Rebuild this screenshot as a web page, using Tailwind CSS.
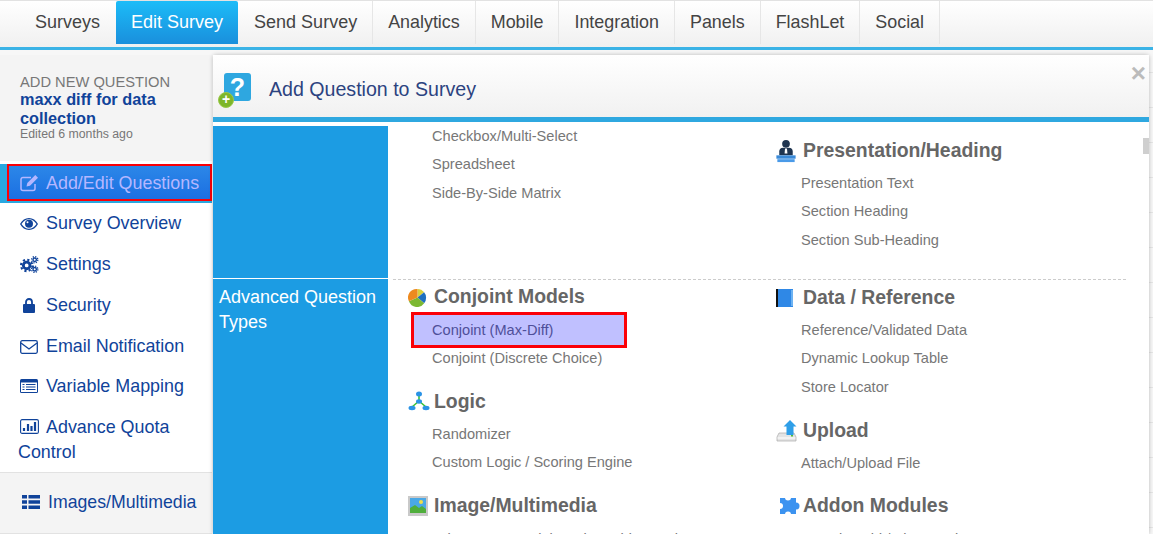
<!DOCTYPE html>
<html lang="en">
<head>
  <meta charset="UTF-8" />
  <title>Add Question to Survey</title>
  <script src="https://cdn.jsdelivr.net/npm/@tailwindcss/browser@4"></script>
</head>
<body class="[font-family:'Liberation_Sans',Arial,sans-serif] bg-[#f7f7f7] w-[1153px] h-[534px] overflow-hidden relative">

  <!-- Top tabs -->
  <nav class="h-[50px] pl-[20px] flex items-start bg-gradient-to-b from-[#ffffff] to-[#f0f0f0] border-t border-[#e2e2e2] border-b-[3px] border-b-[#3bb3e6] text-[18px] text-[#444]">
    <a class="h-[43px] pl-[15px] pr-[16px] flex items-center">Surveys</a>
    <a class="h-[43px] px-[15px] flex items-center text-white rounded-t-[2px] bg-gradient-to-b from-[#1cbcf8] to-[#1a8fdc]">Edit Survey</a>
    <a class="h-[43px] pl-[16px] pr-[15px] flex items-center border-r border-[#e6e6e6]">Send Survey</a>
    <a class="h-[43px] px-[15px] flex items-center border-r border-[#e6e6e6] text-[17.900px]">Analytics</a>
    <a class="h-[43px] px-[15px] flex items-center border-r border-[#e6e6e6] text-[17.900px]">Mobile</a>
    <a class="h-[43px] px-[15px] flex items-center border-r border-[#e6e6e6] text-[17.900px]">Integration</a>
    <a class="h-[43px] px-[15px] flex items-center border-r border-[#e6e6e6] text-[17.900px]">Panels</a>
    <a class="h-[43px] px-[15px] flex items-center border-r border-[#e6e6e6] text-[17.900px]">FlashLet</a>
    <a class="h-[43px] px-[15px] flex items-center border-r border-[#e6e6e6] text-[17.900px]">Social</a>
  </nav>

  <div class="flex items-start">
    <!-- Sidebar -->
    <aside class="w-[212px] mt-[5px] h-[479px] shrink-0 bg-white text-[17.900px] text-[#10439a]">
      <div class="h-[106px] bg-[#f4f4f4] pl-[20px] pt-[19px] mb-[3px]">
        <div class="text-[14.700px] leading-[16px] text-[#777]">ADD NEW QUESTION</div>
        <div class="text-[16.300px] leading-[19px] font-bold w-[170px]">maxx diff for data collection</div>
        <div class="text-[12.300px] leading-[14px] -mt-px text-[#777]">Edited 6 months ago</div>
      </div>

      <!-- highlighted item -->
      <div class="h-[39px] pl-[7px] bg-[#2aa8e0]">
        <div class="h-[37px] mt-px pl-[11px] pt-px flex items-center gap-[6px] border-[2px] border-[#fb0007] bg-gradient-to-b from-[#2c87e8] to-[#1c6fe2] text-[#b5b7ff]">
          <svg viewBox="0 0 20 18" class="w-[20px] h-[18px]" fill="none" stroke="currentColor" stroke-width="1.5"><path d="M15 10v4.500a2 2 0 0 1-2 2H3a2 2 0 0 1-2-2V5.500a2 2 0 0 1 2-2h8"/><path d="M6.500 12.500l.8-3.500 8-8 2.700 2.700-8 8z" fill="currentColor" stroke="none"/></svg>
          <span>Add/Edit Questions</span>
        </div>
      </div>

      <div class="h-[41px] pl-[20px] flex items-center gap-[8px]">
        <svg viewBox="0 0 18 12" class="w-[18px] h-[12px]" fill="currentColor"><path fill-rule="evenodd" d="M9 0c3.800 0 7 2.300 9 6-2 3.700-5.200 6-9 6S2 9.700 0 6c2-3.700 5.200-6 9-6zM9 1.200C6.100 1.200 3.500 3 1.500 6c2 3 4.600 4.800 7.500 4.800S14.500 9 16.500 6C14.500 3 11.900 1.200 9 1.200z"/><circle cx="9" cy="5.700" r="4"/><circle cx="7.500" cy="4.300" r="1" fill="#fff"/></svg>
        <span>Survey Overview</span>
      </div>
      <div class="h-[41px] pl-[20px] flex items-center gap-[7px]">
        <svg viewBox="0 0 20 18" class="w-[19px] h-[17px]" fill="none" stroke="currentColor"><circle cx="7" cy="10" r="3.500" stroke-width="3"/><circle cx="7" cy="10" r="6" stroke-width="2.200" stroke-dasharray="2.300 2.400"/><circle cx="15.500" cy="4" r="1.800" stroke-width="1.500"/><circle cx="15.500" cy="4" r="3.300" stroke-width="1.400" stroke-dasharray="1.300 1.300"/><circle cx="15.500" cy="14" r="1.800" stroke-width="1.500"/><circle cx="15.500" cy="14" r="3.300" stroke-width="1.400" stroke-dasharray="1.300 1.300"/></svg>
        <span>Settings</span>
      </div>
      <div class="h-[41px] pl-[23px] flex items-center gap-[11px]">
        <svg viewBox="0 0 12 15" class="w-[12px] h-[15px]" fill="currentColor"><path d="M1 6h10a1 1 0 0 1 1 1v7a1 1 0 0 1-1 1H1a1 1 0 0 1-1-1V7a1 1 0 0 1 1-1z"/><path d="M3 6.500V4a3 3 0 0 1 6 0v2.500" fill="none" stroke="currentColor" stroke-width="1.800"/></svg>
        <span>Security</span>
      </div>
      <div class="h-[41px] pl-[20px] flex items-center gap-[8px]">
        <svg viewBox="0 0 18 14" class="w-[18px] h-[14px]" fill="none" stroke="currentColor" stroke-width="1.300"><rect x=".7" y=".7" width="16.600" height="12.600" rx="1.500"/><path d="M1 3l8 6 8-6"/></svg>
        <span>Email Notification</span>
      </div>
      <div class="h-[40px] pl-[20px] pb-[2px] flex items-center gap-[8px]">
        <svg viewBox="0 0 18 14" class="w-[18px] h-[14px]"><rect width="18" height="14" rx="1.500" fill="currentColor"/><rect x="1" y="3.500" width="16" height="9.500" fill="#fff"/><path d="M2.500 5.500h2M6 5.500h9.500M2.500 8h2M6 8h9.500M2.500 10.500h2M6 10.500h9.500" stroke="currentColor" stroke-width="1.200"/></svg>
        <span>Variable Mapping</span>
      </div>
      <div class="pl-[18px] pt-[8px] leading-[25px] h-[65px]">
        <svg viewBox="0 0 19 15" class="inline-block align-[-1px] ml-[2px] mr-[7px] w-[19px] h-[15px]" fill="none" stroke="currentColor"><rect x=".6" y=".6" width="17.800" height="13.800" rx="1.500" stroke-width="1.100"/><path d="M4 12V9M8 12V5M11.500 12V7M15 12V3" stroke-width="2.200"/></svg>Advance Quota Control
      </div>
      <div class="h-[62px] bg-[#f4f4f4] border-y border-[#e2e2e2] pl-[22px] pb-[2px] flex items-center gap-[8px]">
        <svg viewBox="0 0 18 14" class="w-[18px] h-[14px]" fill="currentColor"><path d="M0 0h5v3.600H0zM6.500 0H18v3.600H6.500zM0 5.200h5v3.600H0zM6.500 5.200H18v3.600H6.500zM0 10.400h5V14H0zM6.500 10.400H18V14H6.500z"/></svg>
        <span class="text-[17.700px]">Images/Multimedia</span>
      </div>
    </aside>

    <!-- Modal -->
    <section class="w-[936px] ml-px mt-[5px] h-[479px] bg-white rounded-t-[3px] shadow-[0_0_4px_rgba(0,0,0,0.25)] relative">
      <header class="h-[67px] flex items-center pl-[5px] pt-[7px] border-b-[5px] border-[#2fa8e0] bg-gradient-to-b from-[#ffffff] to-[#f1f1f1]">
        <div class="relative w-[34px] h-[36px] mt-[2px]">
          <div class="absolute left-[6px] top-0 w-[27px] h-[28px] rounded-[3px] bg-[#2ea7e0] text-white font-bold text-[25px] leading-[28px] text-center">?</div>
          <div class="absolute left-0 top-[19px] w-[16px] h-[16px] rounded-full bg-[#7db62a] border border-[#9ac94a] text-white font-bold text-[14px] leading-[13px] text-center">+</div>
        </div>
        <h1 class="ml-[17px] text-[19.600px] text-[#2c4380]">Add Question to Survey</h1>
      </header>
      <span class="absolute right-[3px] top-[6px] text-[#bbb] font-bold text-[26px] leading-[24px]">×</span>
      <div class="absolute right-0 top-[83px] w-[6px] h-[16px] bg-[#cfcfcf]"></div>

      <div class="pt-[4px] text-[14.600px] text-[#777]">
        <!-- Row 1 -->
        <div class="flex h-[152px]">
          <div class="w-[175px] bg-[#1c9ce3]"></div>
          <div class="flex-1 flex">
            <ul class="w-[388px] pl-[44px] leading-[28.500px] -mt-[4.300px]">
              <li>Checkbox/Multi-Select</li>
              <li>Spreadsheet</li>
              <li>Side-By-Side Matrix</li>
            </ul>
            <div>
              <h3 class="flex items-center h-[30px] mt-[10px] text-[19.400px] font-bold text-[#666]">
                <svg viewBox="0 0 20 26" class="w-[20px] h-[25px] mr-[7px]"><circle cx="10" cy="5" r="4" fill="#1f3550"/><path d="M3 17v-4q0-4 4-4h6q4 0 4 4v4z" fill="#1f3550"/><path d="M9 10h2l.5 5h-3z" fill="#fff"/><rect x="0" y="17" width="20" height="3.500" fill="#3a8ad8"/><rect x="1" y="21" width="18" height="3" fill="#4a9ae8"/></svg>
                Presentation/Heading
              </h3>
              <ul class="pl-[25px] leading-[28.500px] mt-[2.700px]">
                <li>Presentation Text</li>
                <li>Section Heading</li>
                <li>Section Sub-Heading</li>
              </ul>
            </div>
          </div>
        </div>

        <!-- Row 2 -->
        <div class="flex border-t border-white">
          <div class="w-[175px] h-[260px] bg-[#1c9ce3] text-white text-[18px] leading-[25px] pl-[6px] pt-[6px]">Advanced Question Types</div>
          <div class="flex-1">
            <div class="ml-[5px] mr-[23px] border-t border-dashed border-[#ccc]"></div>
            <div class="flex">
              <div class="w-[388px] pl-[20px]">
                <h3 class="flex items-center h-[34px] text-[19.400px] font-bold text-[#666] gap-[7px]">
                  <svg viewBox="0 0 20 20" class="w-[19px] h-[19px]"><path d="M10 10V1a9 9 0 0 1 7 3.500z" fill="#d9cf3c"/><path d="M10 10l7-5.500A9 9 0 0 1 17 16z" fill="#1e6fc0"/><path d="M10 10l7 6a9 9 0 0 1-16-2z" fill="#7cb832"/><path d="M10 10l-9 4a9 9 0 0 1 9-13z" fill="#ee8a1f"/></svg>
                  Conjoint Models
                </h3>
                <ul class="leading-[28.500px] mt-[2px]">
                  <li class="ml-[3px] w-[216px] h-[36px] -my-[4px] pl-[18px] border-[3px] border-[#fb0007] bg-[#c0c0ff] text-[#4f4f99] leading-[30px] relative">Conjoint (Max-Diff)</li>
                  <li class="pl-[24px]">Conjoint (Discrete Choice)</li>
                </ul>
                <h3 class="flex items-center h-[36px] mt-[11px] text-[19.400px] font-bold text-[#666] gap-[4px]">
                  <svg viewBox="0 0 22 21" class="w-[22px] h-[21px]"><path d="M11 4v6M11 10L4 16M11 10l7 6" fill="none" stroke="#39c13a" stroke-width="1.600"/><ellipse cx="11" cy="3" rx="3" ry="2.500" fill="#2a93e6"/><ellipse cx="11" cy="10.500" rx="3" ry="2.200" fill="#2a93e6"/><ellipse cx="4" cy="17" rx="3.500" ry="2.200" fill="#2a93e6"/><ellipse cx="18" cy="17" rx="3.500" ry="2.200" fill="#2a93e6"/></svg>
                  Logic
                </h3>
                <ul class="pl-[24px] leading-[28.500px]">
                  <li>Randomizer</li>
                  <li>Custom Logic / Scoring Engine</li>
                </ul>
                <h3 class="flex items-center h-[36px] mt-[11px] text-[19.400px] font-bold text-[#666] gap-[6px]">
                  <svg viewBox="0 0 20 20" class="w-[20px] h-[20px]"><rect width="20" height="20" fill="#c9c9c9"/><rect x="2" y="2" width="16" height="15" fill="#4aa8e6"/><path d="M2 12l5-3 4 3 3-2 4 3v4H2z" fill="#4fae3c"/><circle cx="13" cy="6" r="2" fill="#f1de4a"/></svg>
                  Image/Multimedia
                </h3>
                <ul class="pl-[24px] leading-[28.500px] mt-[1px]">
                  <li>Take Data, 5X Dial Testing, Video Rating</li>
                </ul>
              </div>
              <div>
                <h3 class="flex items-center h-[36px] text-[19.400px] font-bold text-[#666]">
                  <svg viewBox="0 0 18 20" class="w-[18px] h-[20px] mr-[9px]"><rect x="1" y="1" width="16" height="18" fill="#2f88e6"/><rect x="0" y="1" width="2" height="18" fill="#111"/><rect x="15" y="2" width="2" height="16" fill="#6cb2f2"/></svg>
                  Data / Reference
                </h3>
                <ul class="pl-[25px] leading-[28.500px] -mt-[0.300px]">
                  <li>Reference/Validated Data</li>
                  <li>Dynamic Lookup Table</li>
                  <li>Store Locator</li>
                </ul>
                <h3 class="flex items-center h-[36px] mt-[11.300px] text-[19.400px] font-bold text-[#666]">
                  <svg viewBox="0 0 21 22" class="w-[21px] h-[22px] mr-[6px]"><path d="M3 13h15l2 4v4H1v-4z" fill="#e4e4e4" stroke="#aaa" stroke-width=".7"/><rect x="1.500" y="17.500" width="18" height="1" fill="#fff"/><rect x="15" y="15" width="2" height="1.500" fill="#4fbe3a"/><path d="M14 0l-6.500 6.500h3V15h7V6.500h3z" fill="#2f9fe8"/></svg>
                  Upload
                </h3>
                <ul class="pl-[25px] leading-[28.500px]">
                  <li>Attach/Upload File</li>
                </ul>
                <h3 class="flex items-center h-[36px] mt-[11px] text-[19.400px] font-bold text-[#666]">
                  <svg viewBox="0 0 21 21" class="w-[21px] h-[21px] ml-[3px] mr-[3px]"><path d="M1 2h16v16H1z" fill="#3c93f0"/><circle cx="17" cy="10" r="3.500" fill="#3c93f0"/><circle cx="9" cy="1.500" r="3" fill="#fff"/><circle cx="1" cy="10" r="3" fill="#fff"/><circle cx="9" cy="18.500" r="3" fill="#fff"/></svg>
                  Addon Modules
                </h3>
                <ul class="pl-[25px] leading-[28.500px] mt-[1px]">
                  <li>Sample Grid / Flex Matrix</li>
                </ul>
              </div>
            </div>
          </div>
        </div>
      </div>
    </section>
    <div class="flex-1 h-[484px] bg-[repeating-linear-gradient(to_bottom,#f7f7f7_0,#f7f7f7_22px,#e6e6e6_22px,#e6e6e6_23px,#f7f7f7_23px,#f7f7f7_35px)]"></div>
  </div>
</body>
</html>
